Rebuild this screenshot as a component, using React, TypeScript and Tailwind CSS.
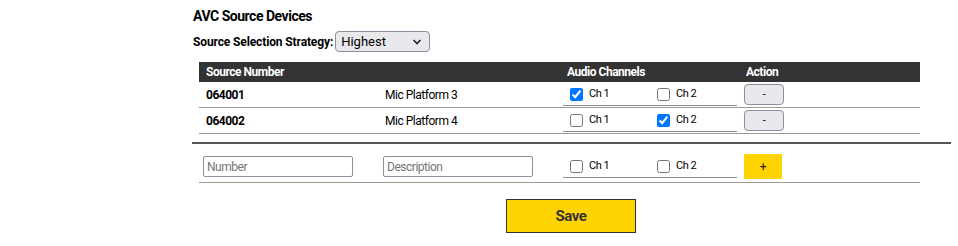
import React from 'react';

type Device = { number: string; description: string; ch1: boolean; ch2: boolean };

const devices: Device[] = [
    { number: '064001', description: 'Mic Platform 3', ch1: true, ch2: false },
    { number: '064002', description: 'Mic Platform 4', ch1: false, ch2: true },
];

const cols = 'grid grid-cols-[180px_180px_180px_181px]';

const Channels = ({ ch1, ch2 }: { ch1: boolean; ch2: boolean }) => (
    <div className="ml-[4px] w-[174px] h-[22px] flex items-center border-b border-[#8c8c8c] text-[11px] text-black">
        <label className="flex items-center w-[87px] pl-[7px]">
            <input type="checkbox" defaultChecked={ch1} className="w-[13px] h-[13px] m-0 mr-[6px]" />
            Ch 1
        </label>
        <label className="flex items-center w-[87px] pl-[7px]">
            <input type="checkbox" defaultChecked={ch2} className="w-[13px] h-[13px] m-0 mr-[6px]" />
            Ch 2
        </label>
    </div>
);

const App: React.FC = () => {
    return (
        <div className="w-[958px] h-[246px] bg-white font-[family-name:Roboto,'Liberation_Sans',sans-serif] tracking-[-0.03em] text-black">
            <div className="ml-[193px] w-[758px] pt-[7px]">
                <h2 className="text-[14px] font-bold leading-[18px]">AVC Source Devices</h2>
                <div className="flex items-center mt-[6px] h-[21px]">
                    <span className="text-[12px] font-bold mr-[2px] tracking-[-0.01em]">Source Selection Strategy:</span>
                    <div className="relative w-[95px] h-[21px] rounded-[4px] border border-[#8f8f9d] bg-[#e9e9ed] flex items-center pl-[5px] text-[13px] tracking-normal">
                        Highest
                        <svg className="absolute right-[7px] top-[6px]" width="10" height="8" viewBox="0 0 10 8">
                            <path d="M1.5 2 L5 5.5 L8.5 2" fill="none" stroke="#222" strokeWidth="1.6" />
                        </svg>
                    </div>
                </div>

                <div className="ml-[6px] w-[721px] mt-[10px]">
                    <div className={`${cols} h-[20px] bg-[#333333] text-[12px] font-bold text-white items-center`}>
                        <div className="pl-[7px]">Source Number</div>
                        <div />
                        <div className="pl-[8px]">Audio Channels</div>
                        <div className="pl-[7px]">Action</div>
                    </div>
                    {devices.map(d => (
                        <div key={d.number} className={`${cols} h-[26px] border-b border-[#9a9a9a] items-center text-[12px]`}>
                            <div className="pl-[7px] pt-[1px] font-bold">{d.number}</div>
                            <div className="pl-[6px] pt-[1px]">{d.description}</div>
                            <Channels ch1={d.ch1} ch2={d.ch2} />
                            <div className="pl-[5px]">
                                <button className="w-[40px] h-[21px] rounded-[4px] border border-[#8f8f9d] bg-[#e9e9ed] text-[11px] leading-none">-</button>
                            </div>
                        </div>
                    ))}
                </div>

                <div className="mt-[8px] h-[2px] bg-[#555555] -ml-[1px]" />

                <div className="ml-[6px] w-[721px] mt-[9px]">
                    <div className={`${cols} h-[30px] border-b border-[#9a9a9a] items-start text-[12px]`}>
                        <div className="pl-[4px] pt-[3px]">
                            <input placeholder="Number" className="w-[150px] h-[21px] border border-[#8f8f9d] rounded-[2px] px-[3px] text-[12px] placeholder:text-[#757575] outline-none" />
                        </div>
                        <div className="pl-[4px] pt-[3px]">
                            <input placeholder="Description" className="w-[150px] h-[21px] border border-[#8f8f9d] rounded-[2px] px-[3px] text-[12px] placeholder:text-[#757575] outline-none" />
                        </div>
                        <div className="pt-[3px]">
                            <Channels ch1={false} ch2={false} />
                        </div>
                        <div className="pl-[5px] pt-[1px]">
                            <button className="w-[38px] h-[25px] bg-[#ffd400] text-[12px] text-[#222]">+</button>
                        </div>
                    </div>
                </div>

                <div className="ml-[313px] mt-[16px]">
                    <button className="w-[130px] h-[34px] bg-[#ffd400] border border-[#333333] text-[15px] font-bold text-[#333333]">Save</button>
                </div>
            </div>
        </div>
    );
};

export default App;
